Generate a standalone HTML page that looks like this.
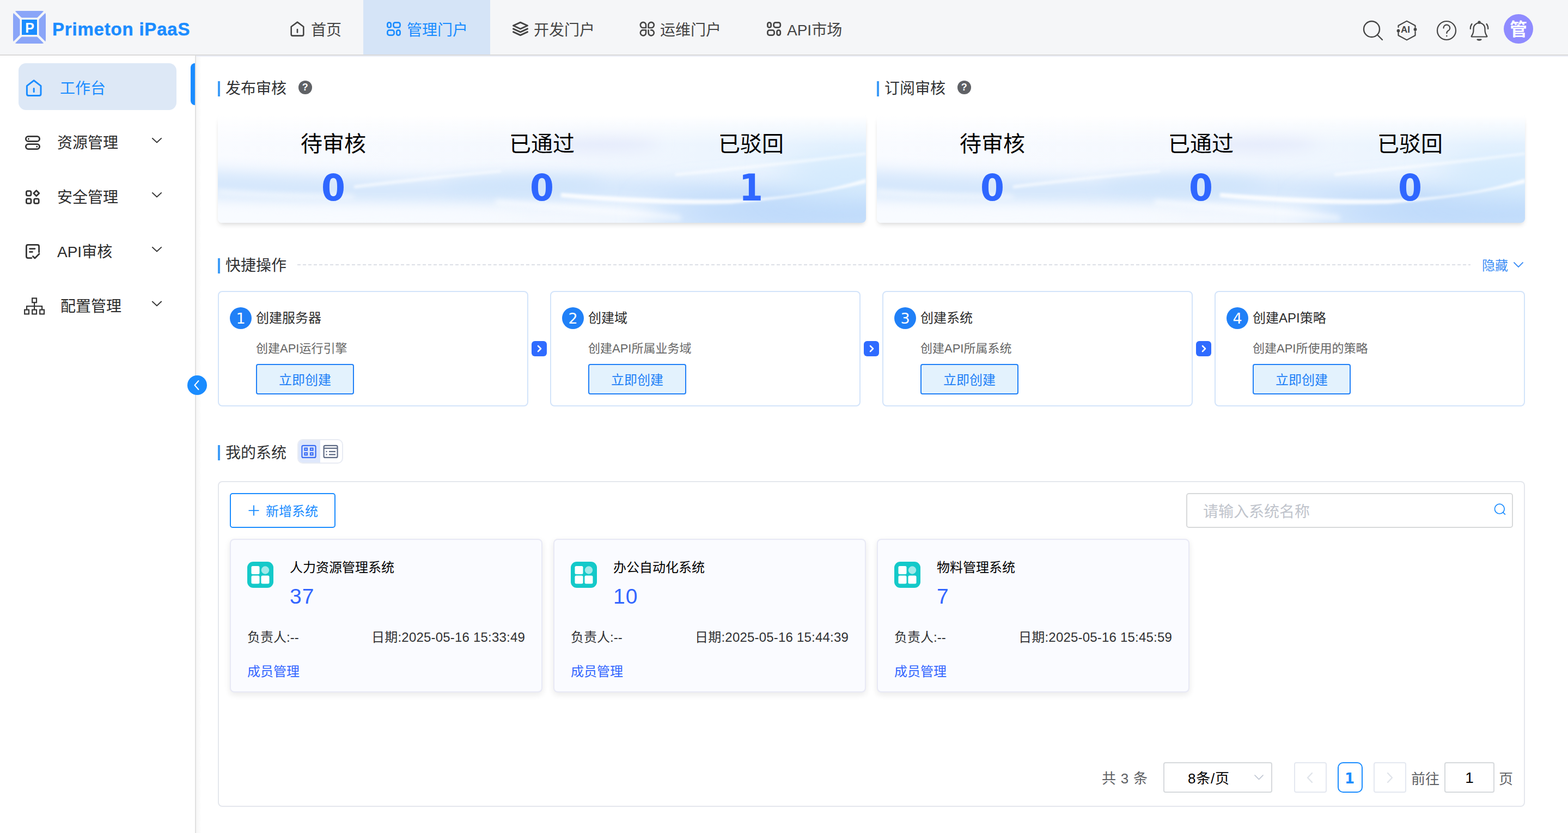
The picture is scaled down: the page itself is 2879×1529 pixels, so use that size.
<!DOCTYPE html>
<html lang="zh-CN">
<head>
<meta charset="utf-8">
<title>Primeton iPaaS</title>
<style>
*{box-sizing:border-box;margin:0;padding:0}
html,body{width:2879px;height:1529px;overflow:hidden;background:#fff}
body{font-family:"Liberation Sans","Noto Sans CJK SC",sans-serif;color:#333;font-size:28px;line-height:1}
#app{position:relative;width:2879px;height:1529px;overflow:hidden;background:#fff}
.abs{position:absolute}
.t{position:absolute;white-space:nowrap;line-height:1}
svg{position:absolute;overflow:visible;display:block}
/* header */
#hd{position:absolute;left:0;top:0;width:2879px;height:100px;background:#f5f6f8}
#hdline{position:absolute;left:0;top:100px;width:2879px;height:2px;background:#dadada}
#hdshadow{position:absolute;left:360px;top:102px;width:2519px;height:2px;background:#ebeef8}
.nav-act{position:absolute;left:667px;top:0;width:233px;height:100px;background:#d5e4f7}
.nav-t{position:absolute;top:42px;font-size:28px;color:#444;white-space:nowrap;line-height:1}
/* sidebar */
#sb{position:absolute;left:0;top:102px;width:358px;height:1427px;background:#fff}
#sbline{position:absolute;left:358px;top:102px;width:2px;height:1427px;background:#e1e1e1}
#sbshadow{position:absolute;left:360px;top:104px;width:10px;height:1427px;background:linear-gradient(90deg,#f6f6f6,#fff)}
.m-act{position:absolute;left:34px;top:116px;width:290px;height:86px;border-radius:14px;background:#dde8f6}
.m-bar{position:absolute;left:350px;top:116px;width:8px;height:77px;border-radius:8px 0 0 8px;background:#1a8cff}
.m-t{position:absolute;font-size:28px;color:#2b2b2b;white-space:nowrap;line-height:1}
/* section titles */
.sec-bar{position:absolute;width:4px;height:28px;background:#3d9bf7}
.sec-t{position:absolute;font-size:28px;color:#303133;white-space:nowrap;line-height:1}
.help{position:absolute;width:24.5px;height:24.5px;border-radius:50%;background:#606266;color:#fff;font-size:18px;font-weight:bold;text-align:center;line-height:25px;font-family:"Liberation Sans",sans-serif}
/* stats */
.stat{position:absolute;top:212px;width:1190px;height:197px;border-radius:2px 2px 8px 8px;overflow:hidden;background:#f4f9ff;}
.stat-sh{position:absolute;top:216px;width:1190px;height:193px;border-radius:2px 2px 8px 8px;box-shadow:0 6px 10px -3px rgba(0,0,0,.14),0 0 6px rgba(0,0,0,.03)}
.stat-l{position:absolute;top:244px;width:300px;margin-left:-150px;text-align:center;font-size:40px;color:#000;white-space:nowrap;line-height:1}
.stat-n{position:absolute;top:311px;width:300px;margin-left:-150px;text-align:center;font-size:68px;transform:scaleX(.93);font-weight:bold;color:#2f67ff;white-space:nowrap;line-height:1;font-family:"DejaVu Sans","Liberation Sans",sans-serif}
/* quick */
.qc{position:absolute;top:534px;width:570px;height:212px;border:2px solid #d3e4fa;border-radius:8px;background:#fff}
.qn{position:absolute;top:564px;width:40px;height:40px;border-radius:50%;background:#2080f7;color:#fff;font-size:27px;text-align:center;line-height:42px;font-family:"DejaVu Sans","Liberation Sans",sans-serif}
.qt{position:absolute;top:572px;font-size:24px;color:#2c2c2c;white-space:nowrap;line-height:1}
.qd{position:absolute;top:629px;font-size:22px;color:#666;white-space:nowrap;line-height:1}
.qb{position:absolute;top:668px;width:180px;height:56px;border:2px solid #2080f7;border-radius:4px;background:#e3f2fd;color:#2080f7;font-size:24px;text-align:center;line-height:55px;white-space:nowrap}
.qa{position:absolute;top:626px;width:27.5px;height:27.5px;border-radius:6px;background:#2f6bff}
/* systems */
#panel{position:absolute;left:400px;top:883px;width:2400px;height:598px;border:2px solid #e4e7ed;border-radius:8px;background:#fff}
.sc{position:absolute;top:989px;width:574px;height:282px;border:2px solid #e8e9f5;border-radius:8px;background:#fafbff;box-shadow:0 4px 12px rgba(0,0,0,.09)}
.si{position:absolute;top:1031px;width:48px;height:48px;border-radius:11px;background:#14c9c9}
.st{position:absolute;top:1030px;font-size:24px;color:#000;white-space:nowrap;line-height:1}
.sn{position:absolute;top:1075px;font-size:39px;letter-spacing:1px;color:#3366ff;white-space:nowrap;line-height:1}
.sl{position:absolute;top:1158px;font-size:24px;color:#303133;white-space:nowrap;line-height:1}
.sm{position:absolute;top:1221px;font-size:24px;color:#3366ff;white-space:nowrap;line-height:1}
.pg{position:absolute;top:1399px;height:56px;border:2px solid #e4e8f0;border-radius:4px;background:#fff}

</style>
</head>
<body>
<div id="app">
<!-- ================= HEADER ================= -->
<div id="hd"></div>
<div class="nav-act"></div>
<div id="hdline"></div>
<div id="hdshadow"></div>
<div class="t" id="logo-t" style="left:96px;top:37px;font-size:33px;font-weight:bold;color:#1b8cff;letter-spacing:0.8px;-webkit-text-stroke:.5px #1b8cff;font-family:'Liberation Sans',sans-serif">Primeton iPaaS</div>
<div class="nav-t" style="left:571px">首页</div>
<div class="nav-t" style="left:747px;color:#1a8cff">管理门户</div>
<div class="nav-t" style="left:980px">开发门户</div>
<div class="nav-t" style="left:1212px">运维门户</div>
<div class="nav-t" style="left:1445px">API市场</div>
<div class="abs" style="left:2761px;top:26px;width:54px;height:54px;border-radius:50%;background:#8f8bff"></div>
<div class="t" style="left:2772px;top:38px;font-size:32px;font-weight:bold;color:#fff">管</div>
<svg width="2879" height="102" viewBox="0 0 2879 102" style="left:0;top:0">
  <!-- logo mark -->
  <g>
    <rect x="24" y="20" width="60" height="60" rx="7" fill="#8aa5f8"/>
    <path d="M24 20 L84 80 M84 20 L24 80" stroke="#f5f6f8" stroke-width="4.5" fill="none"/>
    <rect x="36.5" y="32.5" width="35" height="35" fill="#f5f6f8"/>
    <rect x="40" y="36" width="28" height="28" fill="#1a8cff"/>
  </g>
  <!-- home -->
  <g fill="none" stroke="#444" stroke-width="2.6" stroke-linejoin="round" stroke-linecap="round">
    <path d="M546 40.6 L557.3 49 V63 Q557.3 65.6 554.7 65.6 H537.3 Q534.7 65.6 534.7 63 V49 Z"/>
    <path d="M546 54 V59.5"/>
  </g>
  <!-- grid (active) -->
  <g fill="none" stroke="#1a8cff" stroke-width="2.7">
    <rect x="711.4" y="41.3" width="6.4" height="9.2" rx="3"/>
    <rect x="722.4" y="41.3" width="12.2" height="9.2" rx="3.4"/>
    <rect x="711.4" y="55.4" width="12.2" height="9.2" rx="3.4"/>
    <rect x="728.2" y="55.4" width="6.4" height="9.2" rx="3"/>
  </g>
  <!-- layers -->
  <g fill="none" stroke="#444" stroke-width="3" stroke-linejoin="round" stroke-linecap="round">
    <path d="M955.5 41.2 L968.5 47 L955.5 53 L942.5 47 Z"/>
    <path d="M942.5 52.8 L955.5 58.8 L968.5 52.8"/>
    <path d="M942.5 58.6 L955.5 64.6 L968.5 58.6"/>
  </g>
  <!-- clover -->
  <g fill="none" stroke="#444" stroke-width="2.6" stroke-linejoin="round">
    <path d="M1186 51 H1181.6 A5.1 5.1 0 1 1 1186 46.2 Z"/>
    <path d="M1190.6 51 H1195 A5.1 5.1 0 1 0 1190.6 46.2 Z"/>
    <path d="M1186 55.2 H1181.6 A5.1 5.1 0 1 0 1186 60 Z"/>
    <path d="M1190.6 55.2 V60 A5.1 5.1 0 1 0 1195 55.2" stroke-linecap="round"/>
  </g>
  <!-- grid api -->
  <g fill="none" stroke="#444" stroke-width="2.7">
    <rect x="1409.4" y="41.3" width="6.3" height="9.1" rx="3"/>
    <rect x="1420.6" y="41.3" width="12.2" height="9.1" rx="3.4"/>
    <rect x="1409.4" y="55.4" width="12.2" height="9.2" rx="3.4"/>
    <rect x="1426.5" y="55.4" width="6.3" height="9.2" rx="3"/>
  </g>
  <!-- search -->
  <g fill="none" stroke="#444" stroke-width="2.4" stroke-linecap="round">
    <circle cx="2518.5" cy="53.5" r="14.5"/>
    <path d="M2529 64 L2538 73"/>
  </g>
  <!-- AI hexagon -->
  <g fill="none" stroke="#444" stroke-width="2.2" stroke-linejoin="round" stroke-linecap="round">
    <path d="M2567.5 50 V47 L2583 38.6 L2598.5 47 V50"/>
    <path d="M2567.5 60 V65 L2583 73.4 L2598.5 65 V58"/>
    <circle cx="2567.5" cy="56.5" r="1.8" fill="#444"/>
    <circle cx="2598.5" cy="54" r="1.8" fill="#444"/>
  </g>
  <!-- help -->
  <g fill="none" stroke="#444" stroke-width="2.2" stroke-linecap="round">
    <circle cx="2656" cy="56" r="17"/>
    <path d="M2650.5 51.5 A5.8 5.8 0 1 1 2658.8 56.6 Q2656.3 58 2656.3 61"/>
    <circle cx="2656.3" cy="66" r="1.3" fill="#444" stroke="none"/>
  </g>
  <!-- bell -->
  <g fill="none" stroke="#444" stroke-width="2.2" stroke-linecap="round" stroke-linejoin="round">
    <path d="M2702.5 67.5 H2729.5 Q2731 67.5 2730 66 Q2726.5 61 2726.5 55 V52.5 A10.5 10.5 0 0 0 2705.5 52.5 V55 Q2705.5 61 2702 66 Q2701 67.5 2702.5 67.5 Z"/>
    <circle cx="2716" cy="41" r="1.6"/>
    <path d="M2712.5 72.5 Q2716 75 2719.5 72.5 Z" fill="#444"/>
    <path d="M2702.5 44 Q2699.5 48 2699.8 53"/>
    <path d="M2729.5 44 Q2732.5 48 2732.2 53"/>
  </g>
</svg>
<div class="t" style="left:46.3px;top:38.6px;font-size:25px;font-weight:bold;color:#fff;font-family:'Liberation Sans',sans-serif">P</div>
<div class="t" style="left:2572px;top:46px;font-size:17px;font-weight:bold;color:#444;font-family:'Liberation Sans',sans-serif">AI</div>

<!-- ================= SIDEBAR ================= -->
<div id="sb"></div>
<div id="sbline"></div>
<div id="sbshadow"></div>
<div class="m-act"></div>
<div class="m-bar"></div>
<div class="m-t" style="left:110px;top:149px;color:#1a8cff">工作台</div>
<div class="m-t" style="left:105px;top:249px">资源管理</div>
<div class="m-t" style="left:105px;top:349px">安全管理</div>
<div class="m-t" style="left:105px;top:449px">API审核</div>
<div class="m-t" style="left:111px;top:549px">配置管理</div>
<div class="abs" style="left:344px;top:689px;width:36px;height:36px;border-radius:50%;background:#1a8cff"></div>
<svg width="400" height="700" viewBox="0 100 400 700" style="left:0;top:100px">
  <!-- home active -->
  <g fill="none" stroke="#1a8cff" stroke-width="3" stroke-linejoin="round" stroke-linecap="round">
    <path d="M62.2 147.8 L75 157.6 V172.6 Q75 175.5 72 175.5 H52.4 Q49.4 175.5 49.4 172.6 V157.6 Z"/>
    <path d="M62.2 162.6 V168.4"/>
  </g>
  <!-- resource: two pills -->
  <g fill="none" stroke="#333" stroke-width="2.8">
    <rect x="47.4" y="250.4" width="25.2" height="9" rx="4.5"/>
    <rect x="47.4" y="264.6" width="25.2" height="9" rx="4.5"/>
    <circle cx="52.4" cy="254.9" r="1.5" fill="#333" stroke="none"/>
    <circle cx="67.8" cy="269.1" r="1.5" fill="#333" stroke="none"/>
  </g>
  <!-- security: 3 squares + diamond -->
  <g fill="none" stroke="#333" stroke-width="2.8" stroke-linejoin="round">
    <rect x="48.4" y="350.6" width="8.6" height="8.6" rx="2.4"/>
    <path d="M66.8 349.8 L71.8 354.8 L66.8 359.8 L61.8 354.8 Z"/>
    <rect x="48.4" y="364.8" width="8.6" height="8.6" rx="2.4"/>
    <rect x="62.6" y="364.8" width="8.6" height="8.6" rx="2.4"/>
  </g>
  <!-- api audit: document + check -->
  <g fill="none" stroke="#333" stroke-width="2.8" stroke-linejoin="round" stroke-linecap="round">
    <path d="M58 473.6 H51.4 Q48.4 473.6 48.4 470.6 V452.4 Q48.4 449.4 51.4 449.4 H68.6 Q71.6 449.4 71.6 452.4 V463"/>
    <path d="M54.6 456.6 H64"/>
    <path d="M54.6 462.4 H59.4"/>
    <path d="M60.4 470.4 L64 474 L72 466"/>
  </g>
  <!-- config: tree -->
  <g fill="none" stroke="#333" stroke-width="2.2">
    <rect x="59.2" y="547.4" width="7.8" height="7.8"/>
    <rect x="45.2" y="568.6" width="7.8" height="7.8"/>
    <rect x="59.2" y="568.6" width="7.8" height="7.8"/>
    <rect x="73.2" y="568.6" width="7.8" height="7.8"/>
    <path d="M63.1 556 V568 M49.1 568 V562 H77.1 V568"/>
  </g>
  <!-- chevrons -->
  <g fill="none" stroke="#333" stroke-width="1.9" stroke-linecap="square">
    <path d="M280 254 L288 261.5 L296 254"/>
    <path d="M280 354 L288 361.5 L296 354"/>
    <path d="M280 454 L288 461.5 L296 454"/>
    <path d="M280 553.6 L288 561.1 L296 553.6"/>
  </g>
  <!-- collapse arrow -->
  <path d="M364.5 699 L357.5 707 L364.5 715" fill="none" stroke="#fff" stroke-width="2" stroke-linecap="round" stroke-linejoin="round"/>
</svg>

<!-- ================= STATS ================= -->
<div class="sec-bar" style="left:400px;top:149px"></div>
<div class="sec-t" style="left:414px;top:149px">发布审核</div>
<div class="help" style="left:548px;top:148px">?</div>
<div class="sec-bar" style="left:1610px;top:149px"></div>
<div class="sec-t" style="left:1624px;top:149px">订阅审核</div>
<div class="help" style="left:1758px;top:148px">?</div>

<div class="stat-sh" style="left:400px"></div>
<div class="stat-sh" style="left:1610px"></div>
<div class="stat" style="left:400px">
<svg width="1190" height="197" viewBox="0 0 1190 197" preserveAspectRatio="none" style="left:0;top:0">
  <defs>
    <filter id="bl30" x="-50%" y="-150%" width="200%" height="400%"><feGaussianBlur stdDeviation="30"/></filter>
    <filter id="bl14" x="-50%" y="-150%" width="200%" height="400%"><feGaussianBlur stdDeviation="14"/></filter>
    <filter id="bl5" x="-50%" y="-150%" width="200%" height="400%"><feGaussianBlur stdDeviation="5"/></filter>
    <filter id="bl2" x="-50%" y="-150%" width="200%" height="400%"><feGaussianBlur stdDeviation="2"/></filter>
    <linearGradient id="sbg" x1="0" y1="0" x2="1" y2="0">
      <stop offset="0" stop-color="#f9fbff"/><stop offset="0.5" stop-color="#f4f8fe"/><stop offset="1" stop-color="#e6f2fe"/>
    </linearGradient>
    <linearGradient id="stop" x1="0" y1="0" x2="0" y2="1">
      <stop offset="0" stop-color="#fff" stop-opacity="1"/><stop offset="0.08" stop-color="#fff" stop-opacity=".65"/><stop offset="0.27" stop-color="#fff" stop-opacity="0"/>
    </linearGradient>
    <g id="wave">
      <rect x="0" y="0" width="1190" height="197" fill="url(#sbg)"/>
      <path d="M-40 98 Q300 120 560 112 T1230 150 L1230 200 Q900 150 560 160 T-40 150 Z" fill="#d5e7fc" filter="url(#bl14)"/>
      <ellipse cx="1060" cy="182" rx="270" ry="36" fill="#b7d6fa" filter="url(#bl30)"/>
      <ellipse cx="1150" cy="110" rx="120" ry="36" fill="#d2e9fd" filter="url(#bl30)"/>
      <ellipse cx="560" cy="128" rx="150" ry="16" fill="#cfe4fb" filter="url(#bl14)"/>
      <ellipse cx="700" cy="50" rx="110" ry="16" fill="#e4eafb" filter="url(#bl14)"/>
      <ellipse cx="230" cy="186" rx="330" ry="18" fill="#f8fbff" filter="url(#bl14)"/>
      <path d="M630 142 Q800 156 940 154 T1190 116 L1190 124 Q1080 150 940 162 Q800 166 630 150 Z" fill="#ffffff" opacity=".85" filter="url(#bl2)"/>
      <path d="M840 106 Q1020 88 1190 68 L1190 72 Q1020 94 840 111 Z" fill="#ffffff" opacity=".6" filter="url(#bl2)"/>
      <path d="M250 128 Q380 112 520 100 L520 104 Q380 118 250 134 Z" fill="#ffffff" opacity=".6" filter="url(#bl2)"/>
      <path d="M0 136 Q110 144 250 146 L250 152 Q110 152 0 144 Z" fill="#ffffff" opacity=".6" filter="url(#bl5)"/>
      <path d="M510 154 Q680 166 850 184 L850 192 Q680 176 510 164 Z" fill="#ffffff" opacity=".6" filter="url(#bl5)"/>
      <rect x="0" y="0" width="1190" height="197" fill="url(#stop)"/>
    </g>
  </defs>
  <use href="#wave"/>
</svg>
</div>
<div class="stat" style="left:1610px">
<svg width="1190" height="197" viewBox="0 0 1190 197" preserveAspectRatio="none" style="left:0;top:0"><use href="#wave"/></svg>
</div>
<div class="stat-l" style="left:612px">待审核</div>
<div class="stat-l" style="left:995px">已通过</div>
<div class="stat-l" style="left:1379px">已驳回</div>
<div class="stat-n" style="left:612px">0</div>
<div class="stat-n" style="left:995px">0</div>
<div class="stat-n" style="left:1379px">1</div>
<div class="stat-l" style="left:1822px">待审核</div>
<div class="stat-l" style="left:2205px">已通过</div>
<div class="stat-l" style="left:2589px">已驳回</div>
<div class="stat-n" style="left:1822px">0</div>
<div class="stat-n" style="left:2205px">0</div>
<div class="stat-n" style="left:2589px">0</div>

<!-- ================= QUICK OPS ================= -->
<div class="sec-bar" style="left:400px;top:474px"></div>
<div class="sec-t" style="left:414px;top:474px">快捷操作</div>
<div class="abs" style="left:546px;top:485px;width:2154px;height:2px;background:repeating-linear-gradient(90deg,#dcdfe6 0,#dcdfe6 6px,transparent 6px,transparent 10px)"></div>
<div class="t" style="left:2721px;top:476px;font-size:24px;color:#3d8ef5">隐藏</div>

<div class="qc" style="left:400px"></div>
<div class="qc" style="left:1010px"></div>
<div class="qc" style="left:1620px"></div>
<div class="qc" style="left:2230px"></div>

<div class="qn" style="left:422px">1</div>
<div class="qn" style="left:1032px">2</div>
<div class="qn" style="left:1642px">3</div>
<div class="qn" style="left:2252px">4</div>

<div class="qt" style="left:470px">创建服务器</div>
<div class="qt" style="left:1080px">创建域</div>
<div class="qt" style="left:1690px">创建系统</div>
<div class="qt" style="left:2300px">创建API策略</div>

<div class="qd" style="left:470px">创建API运行引擎</div>
<div class="qd" style="left:1080px">创建API所属业务域</div>
<div class="qd" style="left:1690px">创建API所属系统</div>
<div class="qd" style="left:2300px">创建API所使用的策略</div>

<div class="qb" style="left:470px">立即创建</div>
<div class="qb" style="left:1080px">立即创建</div>
<div class="qb" style="left:1690px">立即创建</div>
<div class="qb" style="left:2300px">立即创建</div>

<div class="qa" style="left:976px"></div>
<div class="qa" style="left:1586px"></div>
<div class="qa" style="left:2196px"></div>
<svg width="2879" height="300" viewBox="0 460 2879 300" style="left:0;top:460px">
  <g fill="none" stroke="#fff" stroke-width="2.6" stroke-linecap="round" stroke-linejoin="round">
    <path d="M988 635 L993 640 L988 645"/>
    <path d="M1598 635 L1603 640 L1598 645"/>
    <path d="M2208 635 L2213 640 L2208 645"/>
  </g>
  <path d="M2780 482 L2788 490 L2796 482" fill="none" stroke="#3d8ef5" stroke-width="1.8" stroke-linecap="round" stroke-linejoin="round"/>
</svg>

<!-- ================= MY SYSTEMS ================= -->
<div class="sec-bar" style="left:400px;top:817px"></div>
<div class="sec-t" style="left:414px;top:818px">我的系统</div>
<div class="abs" style="left:546px;top:806px;width:84px;height:45px;border:2px solid #e8ebf3;border-radius:10px;background:#fff;overflow:hidden"><div class="abs" style="left:0;top:0;width:40px;height:41px;background:#dfe8fb"></div></div>

<div id="panel"></div>
<div class="abs" style="left:422px;top:905px;width:194px;height:64px;border:2px solid #1a8cff;border-radius:5px;background:#fff"></div>
<div class="t" style="left:488px;top:927px;font-size:24px;color:#1a8cff">新增系统</div>
<div class="abs" style="left:2178px;top:905px;width:600px;height:64px;border:2px solid #d7d9da;border-radius:5px;background:#fff"></div>
<div class="t" style="left:2209px;top:926px;font-size:28px;color:#c0c4cc">请输入系统名称</div>

<div class="sc" style="left:422px"></div>
<div class="sc" style="left:1016px"></div>
<div class="sc" style="left:1610px"></div>
<div class="si" style="left:454px"></div>
<div class="si" style="left:1048px"></div>
<div class="si" style="left:1642px"></div>
<div class="st" style="left:532px">人力资源管理系统</div>
<div class="st" style="left:1126px">办公自动化系统</div>
<div class="st" style="left:1720px">物料管理系统</div>
<div class="sn" style="left:532px">37</div>
<div class="sn" style="left:1126px">10</div>
<div class="sn" style="left:1720px">7</div>
<div class="sl" style="left:454px">负责人:--</div>
<div class="sl" style="left:1048px">负责人:--</div>
<div class="sl" style="left:1642px">负责人:--</div>
<div class="sl" style="left:664px;width:300px;text-align:right;letter-spacing:.2px">日期:2025-05-16 15:33:49</div>
<div class="sl" style="left:1258px;width:300px;text-align:right;letter-spacing:.2px">日期:2025-05-16 15:44:39</div>
<div class="sl" style="left:1852px;width:300px;text-align:right;letter-spacing:.2px">日期:2025-05-16 15:45:59</div>
<div class="sm" style="left:454px">成员管理</div>
<div class="sm" style="left:1048px">成员管理</div>
<div class="sm" style="left:1642px">成员管理</div>

<div class="t" style="left:2023px;top:1416px;font-size:26px;color:#606266;word-spacing:1.5px">共 3 条</div>
<div class="pg" style="left:2136px;width:200px;border-color:#d6d9dc"></div>
<div class="t" style="left:2181px;top:1416px;font-size:26px;color:#000;letter-spacing:.8px">8条/页</div>
<div class="pg" style="left:2376px;width:60px"></div>
<div class="pg" style="left:2456px;width:46px;border-color:#1a8cff;border-radius:10px"></div>
<div class="t" style="left:2455px;top:1416px;width:46px;text-align:center;font-size:26px;font-weight:bold;color:#1a8cff;font-family:'DejaVu Sans','Liberation Sans',sans-serif">1</div>
<div class="pg" style="left:2522px;width:60px"></div>
<div class="t" style="left:2591px;top:1417px;font-size:26px;color:#606266">前往</div>
<div class="pg" style="left:2652px;width:92px;border-color:#d6d9dc"></div>
<div class="t" style="left:2652px;top:1414px;width:92px;text-align:center;font-size:28px;color:#000">1</div>
<div class="t" style="left:2752px;top:1417px;font-size:26px;color:#606266">页</div>

<svg width="2879" height="729" viewBox="0 800 2879 729" style="left:0;top:800px">
  <!-- toggle icons -->
  <g fill="none" stroke="#3b6ef5" stroke-width="2.2">
    <rect x="554.4" y="817.9" width="25.2" height="22" rx="2.5"/>
    <rect x="559.4" y="822.6" width="4.6" height="4"/>
    <rect x="570" y="822.6" width="4.6" height="4"/>
    <rect x="559.4" y="831.2" width="4.6" height="4"/>
    <rect x="570" y="831.2" width="4.6" height="4"/>
  </g>
  <g fill="none" stroke="#5f6b85" stroke-width="2.2">
    <rect x="594.6" y="817.9" width="25" height="22" rx="2.5"/>
    <path d="M594.6 822.8 H619.6"/>
    <path d="M604 828.8 H616 M604 834.3 H616"/>
    <path d="M598.4 828.8 H600.6 M598.4 834.3 H600.6"/>
  </g>
  <!-- plus -->
  <path d="M466 927.6 V946.6 M456.5 937.1 H475.5" fill="none" stroke="#1a8cff" stroke-width="1.9"/>
  <!-- search small -->
  <g fill="none" stroke="#1a8cff" stroke-width="1.7" stroke-linecap="round">
    <circle cx="2753.3" cy="934.1" r="8.9"/>
    <path d="M2759.8 940.6 L2763.4 944.2"/>
  </g>
  <!-- system icons -->
  <g fill="#fff">
    <rect x="461.5" y="1039" width="15" height="15" rx="2.5"/>
    <circle cx="487" cy="1046.5" r="7.2" opacity=".6"/>
    <rect x="461.5" y="1056.5" width="15" height="15" rx="2.5"/>
    <rect x="479.5" y="1056.5" width="15" height="15" rx="2.5"/>
    <rect x="1055.5" y="1039" width="15" height="15" rx="2.5"/>
    <circle cx="1081" cy="1046.5" r="7.2" opacity=".6"/>
    <rect x="1055.5" y="1056.5" width="15" height="15" rx="2.5"/>
    <rect x="1073.5" y="1056.5" width="15" height="15" rx="2.5"/>
    <rect x="1649.5" y="1039" width="15" height="15" rx="2.5"/>
    <circle cx="1675" cy="1046.5" r="7.2" opacity=".6"/>
    <rect x="1649.5" y="1056.5" width="15" height="15" rx="2.5"/>
    <rect x="1667.5" y="1056.5" width="15" height="15" rx="2.5"/>
  </g>
  <!-- pagination arrows -->
  <g fill="none" stroke-width="2" stroke-linecap="round" stroke-linejoin="round">
    <path d="M2304 1423 L2311.5 1430.5 L2319 1423" stroke="#bcc3d0" stroke-width="1.7"/>
    <path d="M2409 1419 L2401 1427.5 L2409 1436" stroke="#e0e4ea" stroke-width="2.4"/>
    <path d="M2548 1419 L2556 1427.5 L2548 1436" stroke="#e0e4ea" stroke-width="2.4"/>
  </g>
</svg>

</div>
</body>
</html>
